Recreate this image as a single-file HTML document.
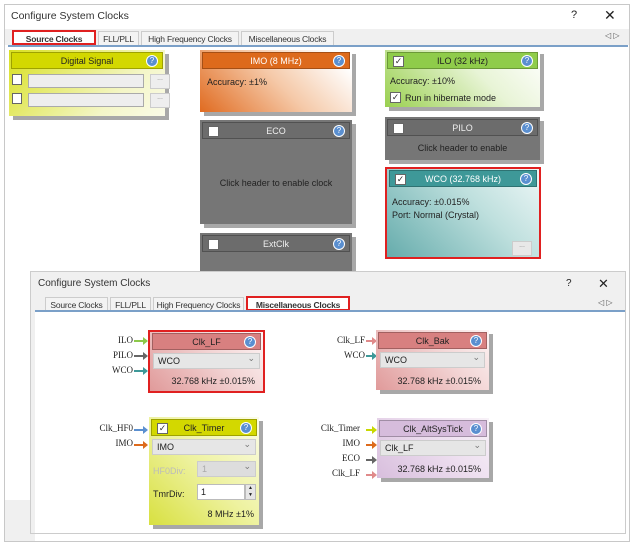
<!DOCTYPE html>
<html><head><style>
*{box-sizing:border-box}
body{margin:0;width:636px;height:550px;background:#fff;font-family:"Liberation Sans",sans-serif;font-size:9px;color:#222;position:relative;overflow:hidden}
.a{position:absolute;white-space:nowrap}
.card{position:absolute;box-shadow:4px 4px 0 #a8a8a8}
.hd{position:absolute;left:2px;right:2px;top:2px;height:17px;text-align:center;line-height:16px;font-size:9px;border:1px solid rgba(0,0,0,.25);white-space:nowrap}
.q{position:absolute;right:4px;top:2px;width:12px;height:12px;border-radius:50%;background:#5a8fd0;border:1px solid #fff;color:#fff;font-size:8px;line-height:10px;text-align:center}
.cb{position:absolute;left:5px;top:3px;width:11px;height:11px;background:#fff;border:1px solid #666;font-size:9px;line-height:9px;text-align:center;color:#333}
.dd{position:absolute;background:#e6e6e6;border:1px solid #ccc;height:16px;line-height:14px;padding-left:4px;font-size:9px}
.dd:after{content:"⌄";position:absolute;right:4px;top:-3px;color:#777}
.tab{position:absolute;height:15px;line-height:14px;border:1px solid #ccc;border-bottom:none;background:#f3f3f3;font-size:8.5px;color:#333;text-align:center;white-space:nowrap;overflow:hidden;letter-spacing:-0.2px}
.lbl{position:absolute;font-family:"Liberation Serif",serif;font-size:9px;text-align:right;width:40px;white-space:nowrap}
.ar{position:absolute;height:2px}
.ar:after{content:"";position:absolute;right:-4px;top:-3px;border-left:5px solid;border-left-color:inherit;border-top:4px solid transparent;border-bottom:4px solid transparent}
</style></head><body>
<div class="a" style="left:4px;top:4px;width:626px;height:538px;border:1px solid #c8c8c8;background:#fff"></div>
<div class="a" style="left:11px;top:10px;font-size:10.5px;color:#333">Configure System Clocks</div>
<div class="a" style="left:571px;top:9px;font-size:11px">?</div>
<div class="a" style="left:604px;top:7px;font-size:14px">✕</div>
<div class="a" style="left:5px;top:29px;width:624px;height:16px;background:#f0f0f0"></div>
<div class="tab" style="left:12px;top:30px;width:84px;background:#fff;font-weight:bold;border:2px solid #e02020">Source Clocks</div>
<div class="tab" style="left:98px;top:31px;width:41px">FLL/PLL</div>
<div class="tab" style="left:141px;top:31px;width:98px">High Frequency Clocks</div>
<div class="tab" style="left:241px;top:31px;width:93px">Miscellaneous Clocks</div>
<div class="a" style="left:605px;top:31px;font-size:8px;color:#555">◁ ▷</div>
<div class="a" style="left:8px;top:45px;width:620px;height:2px;background:#7ba0c8"></div>

<div class="card" style="left:9px;top:50px;width:156px;height:66px;background:linear-gradient(135deg,#d8e020,#f4f6c8 70%,#fafbe8)">
<div class="hd" style="background:#d3d800">Digital Signal<div class="q">?</div></div>
<div class="cb" style="left:3px;top:24px;width:10px;height:11px"></div>
<div class="a" style="left:19px;top:24px;width:116px;height:14px;background:#eee;border:1px solid #aaa"></div>
<div class="a" style="left:141px;top:24px;width:20px;height:15px;background:#eee;border:1px solid #ccc;font-size:7px;text-align:center;color:#888">...</div>
<div class="cb" style="left:3px;top:43px;width:10px;height:11px"></div>
<div class="a" style="left:19px;top:43px;width:116px;height:14px;background:#eee;border:1px solid #aaa"></div>
<div class="a" style="left:141px;top:43px;width:20px;height:15px;background:#eee;border:1px solid #ccc;font-size:7px;text-align:center;color:#888">...</div>
</div>
<div class="card" style="left:200px;top:50px;width:152px;height:62px;background:linear-gradient(45deg,#e06b20,#f5c9a8 50%,#fff 90%)">
<div class="hd" style="background:#dd6a1c;color:#fff">IMO (8 MHz)<div class="q">?</div></div>
<div class="a" style="left:7px;top:27px">Accuracy: ±1%</div>
</div>
<div class="card" style="left:200px;top:120px;width:152px;height:104px;background:#767676">
<div class="hd" style="background:#6c6c6c;color:#eee">ECO<div class="cb"></div><div class="q">?</div></div>
<div class="a" style="left:0;right:0;top:58px;text-align:center;font-size:9px">Click header to enable clock</div>
</div>
<div class="card" style="left:200px;top:233px;width:152px;height:45px;background:#767676">
<div class="hd" style="background:#6c6c6c;color:#eee">ExtClk<div class="cb"></div><div class="q">?</div></div>
</div>
<div class="card" style="left:385px;top:50px;width:155px;height:57px;background:linear-gradient(45deg,#9ad050,#e8f4d6 60%,#fff)">
<div class="hd" style="background:#8fcc4a">ILO (32 kHz)<div class="cb">✓</div><div class="q">?</div></div>
<div class="a" style="left:5px;top:26px">Accuracy: ±10%</div>
<div class="cb" style="left:5px;top:42px">✓</div>
<div class="a" style="left:20px;top:43px">Run in hibernate mode</div>
</div>
<div class="card" style="left:385px;top:117px;width:155px;height:43px;background:#767676">
<div class="hd" style="background:#6c6c6c;color:#eee">PILO<div class="cb"></div><div class="q">?</div></div>
<div class="a" style="left:0;right:0;top:26px;text-align:center;font-size:9px">Click header to enable</div>
</div>
<div class="a" style="left:385px;top:167px;width:156px;height:92px;border:2px solid #e02020;background:linear-gradient(45deg,#66acac,#bfe0de 60%,#eef7f7)">
<div class="hd" style="background:#3e9898;color:#fff;top:1px">WCO (32.768 kHz)<div class="cb">✓</div><div class="q">?</div></div>
<div class="a" style="left:5px;top:28px">Accuracy: ±0.015%</div>
<div class="a" style="left:5px;top:41px">Port: Normal (Crystal)</div>
<div class="a" style="left:125px;top:72px;width:20px;height:15px;background:#e8e8e8;border:1px solid #ccc;font-size:7px;text-align:center;color:#888">...</div>
</div>

<div class="a" style="left:5px;top:500px;width:30px;height:41px;background:#f0f0f0"></div>
<div class="a" style="left:4px;top:541px;width:626px;height:1px;background:#c8c8c8"></div>
<div class="a" style="left:30px;top:271px;width:596px;height:263px;background:#f0f0f0;border:1px solid #ccc"></div>
<div class="a" style="left:35px;top:312px;width:590px;height:221px;background:#fff"></div>
<div class="a" style="left:38px;top:278px;font-size:10px;color:#333">Configure System Clocks</div>
<div class="a" style="left:566px;top:278px;font-size:10px">?</div>
<div class="a" style="left:598px;top:276px;font-size:13px">✕</div>
<div class="tab" style="left:45px;top:297px;width:63px">Source Clocks</div>
<div class="tab" style="left:110px;top:297px;width:41px">FLL/PLL</div>
<div class="tab" style="left:153px;top:297px;width:91px">High Frequency Clocks</div>
<div class="tab" style="left:246px;top:296px;width:104px;background:#fff;font-weight:bold;border:2px solid #e02020">Miscellaneous Clocks</div>
<div class="a" style="left:598px;top:298px;font-size:8px;color:#555">◁ ▷</div>
<div class="a" style="left:35px;top:310px;width:590px;height:2px;background:#7ba0c8"></div>

<div class="lbl" style="left:93px;top:335px">ILO</div><div class="ar" style="left:134px;top:340px;width:10px;background:#8cc84a;border-color:#8cc84a"></div>
<div class="lbl" style="left:93px;top:350px">PILO</div><div class="ar" style="left:134px;top:355px;width:10px;background:#666;border-color:#666"></div>
<div class="lbl" style="left:93px;top:365px">WCO</div><div class="ar" style="left:134px;top:370px;width:10px;background:#3e9898;border-color:#3e9898"></div>
<div class="a" style="left:148px;top:330px;width:117px;height:63px;border:2px solid #e02020;background:linear-gradient(45deg,#e09a9a,#f3d6d6 60%,#fdf5f5)">
<div class="hd" style="background:#d88080;top:1px">Clk_LF<div class="q">?</div></div>
<div class="dd" style="left:3px;right:3px;top:21px">WCO</div>
<div class="a" style="right:8px;top:44px">32.768 kHz ±0.015%</div>
</div>
<div class="lbl" style="left:325px;top:335px">Clk_LF</div><div class="ar" style="left:366px;top:340px;width:7px;background:#e08a8a;border-color:#e08a8a"></div>
<div class="lbl" style="left:325px;top:350px">WCO</div><div class="ar" style="left:366px;top:355px;width:7px;background:#3e9898;border-color:#3e9898"></div>
<div class="card" style="left:376px;top:330px;width:113px;height:60px;background:linear-gradient(45deg,#e09a9a,#f3d6d6 60%,#fdf5f5)">
<div class="hd" style="background:#d88080">Clk_Bak<div class="q">?</div></div>
<div class="dd" style="left:4px;right:4px;top:22px">WCO</div>
<div class="a" style="right:8px;top:46px">32.768 kHz ±0.015%</div>
</div>
<div class="lbl" style="left:93px;top:423px">Clk_HF0</div><div class="ar" style="left:134px;top:429px;width:10px;background:#5a8fd0;border-color:#5a8fd0"></div>
<div class="lbl" style="left:93px;top:438px">IMO</div><div class="ar" style="left:134px;top:444px;width:10px;background:#dd6a1c;border-color:#dd6a1c"></div>
<div class="card" style="left:149px;top:417px;width:110px;height:108px;background:linear-gradient(45deg,#d8e040,#eef2a0 50%,#fbfce8)">
<div class="hd" style="background:#d3d800">Clk_Timer<div class="cb">✓</div><div class="q">?</div></div>
<div class="dd" style="left:3px;right:3px;top:22px">IMO</div>
<div class="a" style="left:4px;top:49px;color:#bbb">HF0Div:</div>
<div class="dd" style="left:48px;right:3px;top:44px;color:#aaa;background:#ddd">1</div>
<div class="a" style="left:4px;top:72px">TmrDiv:</div>
<div class="a" style="left:48px;top:67px;width:48px;height:16px;background:#fff;border:1px solid #bbb;padding-left:3px;line-height:14px">1</div>
<div class="a" style="left:96px;top:67px;width:11px;height:16px;background:#e6e6e6;border:1px solid #bbb;font-size:5px;text-align:center;line-height:7px">▲<br>▼</div>
<div class="a" style="right:5px;top:92px">8 MHz ±1%</div>
</div>
<div class="lbl" style="left:320px;top:423px">Clk_Timer</div><div class="ar" style="left:366px;top:429px;width:7px;background:#c8d800;border-color:#c8d800"></div>
<div class="lbl" style="left:320px;top:438px">IMO</div><div class="ar" style="left:366px;top:444px;width:7px;background:#dd6a1c;border-color:#dd6a1c"></div>
<div class="lbl" style="left:320px;top:453px">ECO</div><div class="ar" style="left:366px;top:459px;width:7px;background:#666;border-color:#666"></div>
<div class="lbl" style="left:320px;top:468px">Clk_LF</div><div class="ar" style="left:366px;top:474px;width:7px;background:#e08a8a;border-color:#e08a8a"></div>
<div class="card" style="left:377px;top:418px;width:112px;height:60px;background:linear-gradient(45deg,#d8bedd,#eee0f0 60%,#f8f2f8)">
<div class="hd" style="background:#d6bcdc">Clk_AltSysTick<div class="q">?</div></div>
<div class="dd" style="left:3px;right:3px;top:22px">Clk_LF</div>
<div class="a" style="right:8px;top:46px">32.768 kHz ±0.015%</div>
</div>
</body></html>
